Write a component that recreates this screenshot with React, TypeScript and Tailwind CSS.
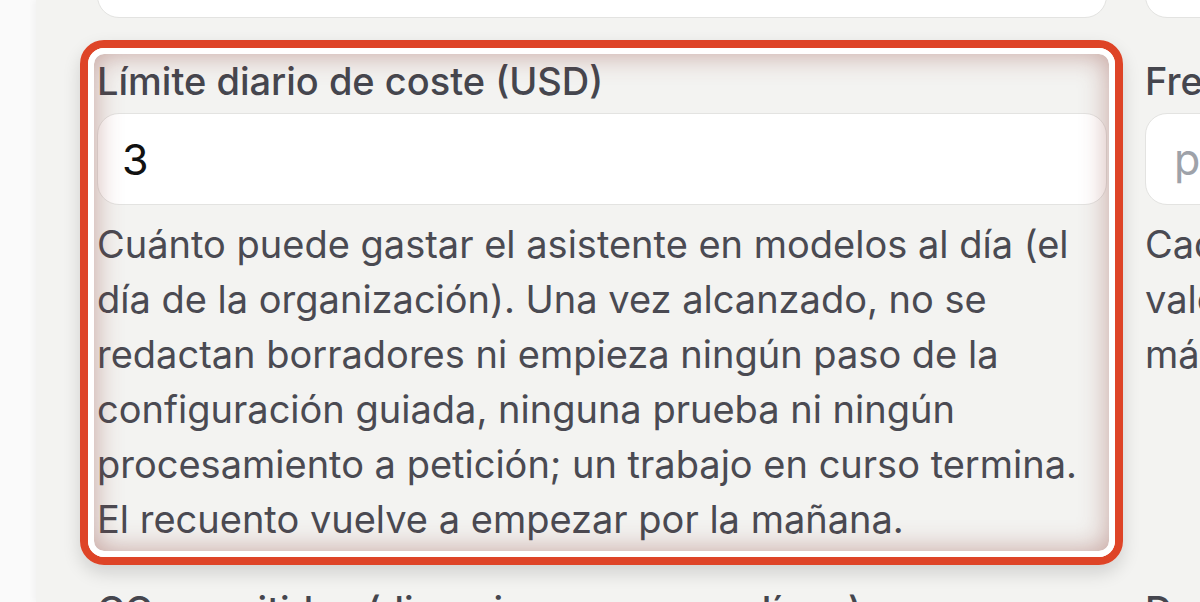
import React from "react";

export default function App() {
  return (
    <div className="w-[1200px] h-[602px] overflow-hidden flex bg-[#fafafa] font-[Inter,sans-serif]">
      <div className="w-[36px] shrink-0 bg-[#fafafa]" />
      <div className="flex-1 bg-[#f3f3f1] shadow-[-2px_0_6px_rgba(0,0,0,0.04)] pl-[61px] overflow-hidden">
        <div className="grid grid-cols-[1010px_400px] gap-x-[38px] gap-y-[36px] -mt-[74px]">
          {/* Row 0: inputs from the row above */}
          <div className="h-[92px] rounded-[22px] bg-white border-[1.5px] border-[#e3e3e1]" />
          <div className="h-[92px] rounded-[22px] bg-white border-[1.5px] border-[#e3e3e1]" />

          {/* Row 1 left: highlighted field */}
          <div className="relative">
            <label className="block text-[38px] leading-[55px] font-medium text-[#45464e]">
              Límite diario de coste (USD)
            </label>
            <div className="mt-[4px] h-[92px] rounded-[22px] bg-white border-[1.5px] border-[#e3e3e1] flex items-center px-[24px]">
              <span className="text-[43px] text-[#111111] leading-none">3</span>
            </div>
            <p className="mt-[12px] text-[38px] leading-[55px] text-[#4a4a52]">
              Cuánto puede gastar el asistente en modelos al día (el día de la organización). Una vez alcanzado, no se redactan borradores ni empieza ningún paso de la configuración guiada, ninguna prueba ni ningún procesamiento a petición; un trabajo en curso termina. El recuento vuelve a empezar por la mañana.
            </p>
            {/* highlight overlay */}
            <div className="absolute -left-[17px] -right-[16px] -top-[14px] -bottom-[18px] rounded-[24px] border-[8px] border-[#de4427] shadow-[0_8px_18px_rgba(0,0,0,0.14)] pointer-events-none">
              <div className="w-full h-full rounded-[16px] border-[6px] border-white shadow-[inset_0_0_28px_rgba(140,60,50,0.45)]" />
            </div>
          </div>

          {/* Row 1 right */}
          <div>
            <label className="block text-[38px] leading-[55px] font-medium text-[#45464e] whitespace-nowrap">
              Frecuencia de resumen
            </label>
            <div className="mt-[4px] h-[92px] rounded-[22px] bg-white border-[1.5px] border-[#e3e3e1] flex items-center px-[28px]">
              <span className="text-[43px] text-[#9ea2a9] leading-none whitespace-nowrap">p. ej. diaria</span>
            </div>
            <p className="mt-[12px] text-[38px] leading-[55px] text-[#4a4a52] whitespace-nowrap">
              Cada cuánto se envía
              <br />
              valor por defecto
              <br />
              máximo una vez
            </p>
          </div>

          {/* Row 2 */}
          <label className="block text-[38px] leading-[55px] font-medium text-[#45464e] whitespace-nowrap">
            CC permitidos (direcciones, una por línea)
          </label>
          <label className="block text-[38px] leading-[55px] font-medium text-[#45464e] whitespace-nowrap">
            Destinatarios
          </label>
        </div>
      </div>
    </div>
  );
}
